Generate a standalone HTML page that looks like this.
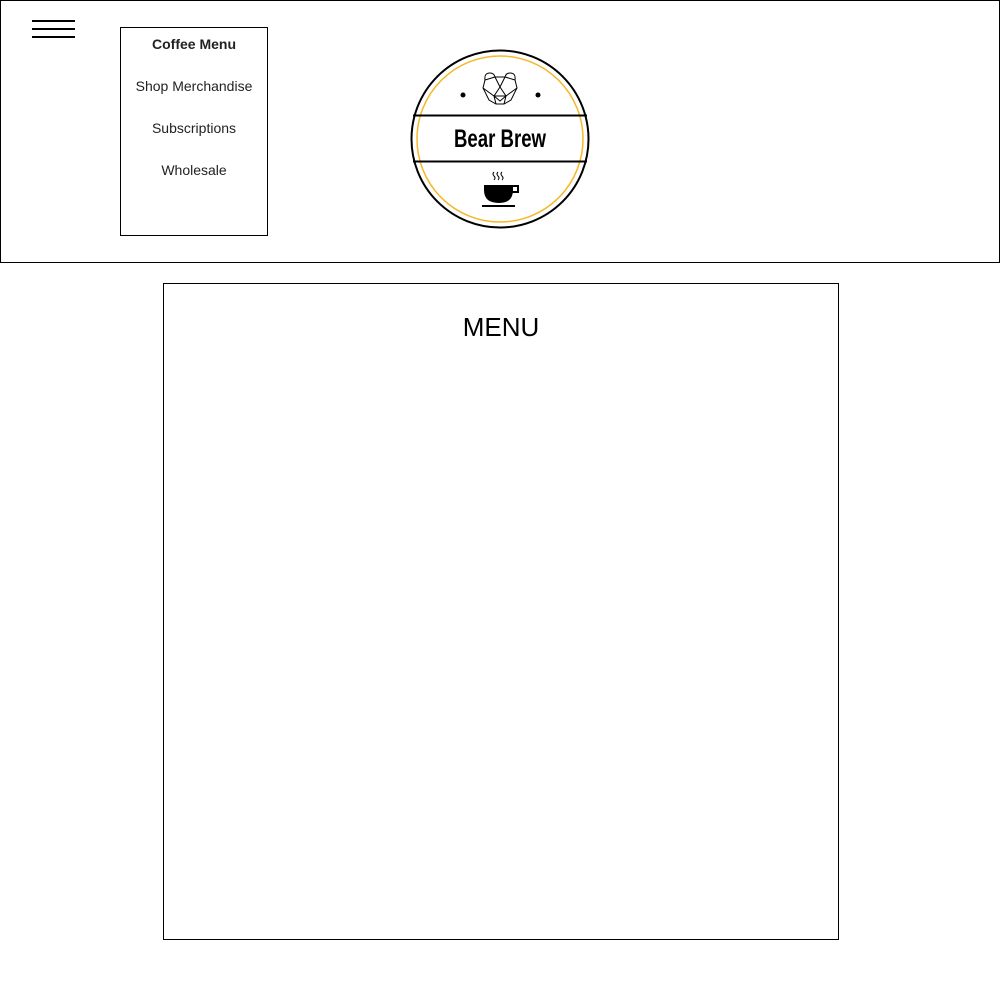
<!DOCTYPE html>
<html><head><style>
body{margin:0;width:1000px;height:1000px;background:#fff;position:relative;font-family:"Liberation Sans",sans-serif;overflow:hidden}
.hdr{position:absolute;left:0;top:0;width:998px;height:261px;border:1px solid #000}
.ham{position:absolute;left:32px;width:43px;height:2px;background:#000}
.dd{position:absolute;left:120px;top:27px;width:146px;height:207px;border:1px solid #000;text-align:center;font-size:14px;color:#222}
.dd div{position:absolute;left:0;width:100%}
.menu{position:absolute;left:163px;top:283px;width:674px;height:655px;border:1px solid #000}
.menu h1{margin:0;position:absolute;top:28px;width:100%;text-align:center;font-weight:normal;font-size:26px}
</style></head><body>
<div class="hdr"></div>
<div class="ham" style="top:20px"></div>
<div class="ham" style="top:28px"></div>
<div class="ham" style="top:36px"></div>
<div class="dd">
<div style="top:8px;font-weight:bold">Coffee Menu</div>
<div style="top:50px">Shop Merchandise</div>
<div style="top:92px">Subscriptions</div>
<div style="top:134px">Wholesale</div>
</div>
<svg style="position:absolute;left:400px;top:40px" width="200" height="200" viewBox="400 40 200 200">
<circle cx="500" cy="139" r="88.5" fill="none" stroke="#000" stroke-width="2"/>
<circle cx="500" cy="139" r="83" fill="none" stroke="#f5b82a" stroke-width="1.5"/>
<line x1="413" y1="115.5" x2="587" y2="115.5" stroke="#000" stroke-width="2"/>
<line x1="413" y1="161.5" x2="587" y2="161.5" stroke="#000" stroke-width="2"/>
<circle cx="463" cy="95" r="2.5"/><circle cx="538" cy="95" r="2.5"/>
<g fill="none" stroke="#000" stroke-width="1">
<path d="M485 80 Q484 73 490 73 Q494 73 495 77 L505 77 Q506 73 510 73 Q516 73 515 80 L517 88 L511 100 L504 104 L496 104 L489 100 L483 88 Z"/>
<path d="M485 80 L495 77 L500 87 L505 77 L515 80 M483 88 L494 96 L500 87 L506 96 L517 88 M494 96 L496 104 M506 96 L504 104 M494 96 L506 96 L500 101 Z"/>
</g>
<text x="500" y="147" text-anchor="middle" font-family="Liberation Sans,sans-serif" font-weight="bold" font-size="25" textLength="92" lengthAdjust="spacingAndGlyphs">Bear Brew</text>
<path d="M484 185 H513 V190 Q513 203 499 203 Q484 203 484 190 Z"/>
<path d="M512 186 H518 V192 H512" fill="none" stroke="#000" stroke-width="2"/>
<rect x="482" y="205" width="33" height="2"/>
<path d="M494 172 q-2 2 0 4 q2 2 0 4 M498 172 q-2 2 0 4 q2 2 0 4 M502 172 q-2 2 0 4 q2 2 0 4" fill="none" stroke="#000" stroke-width="1"/>
</svg>
<div class="menu"><h1>MENU</h1></div>
</body></html>
